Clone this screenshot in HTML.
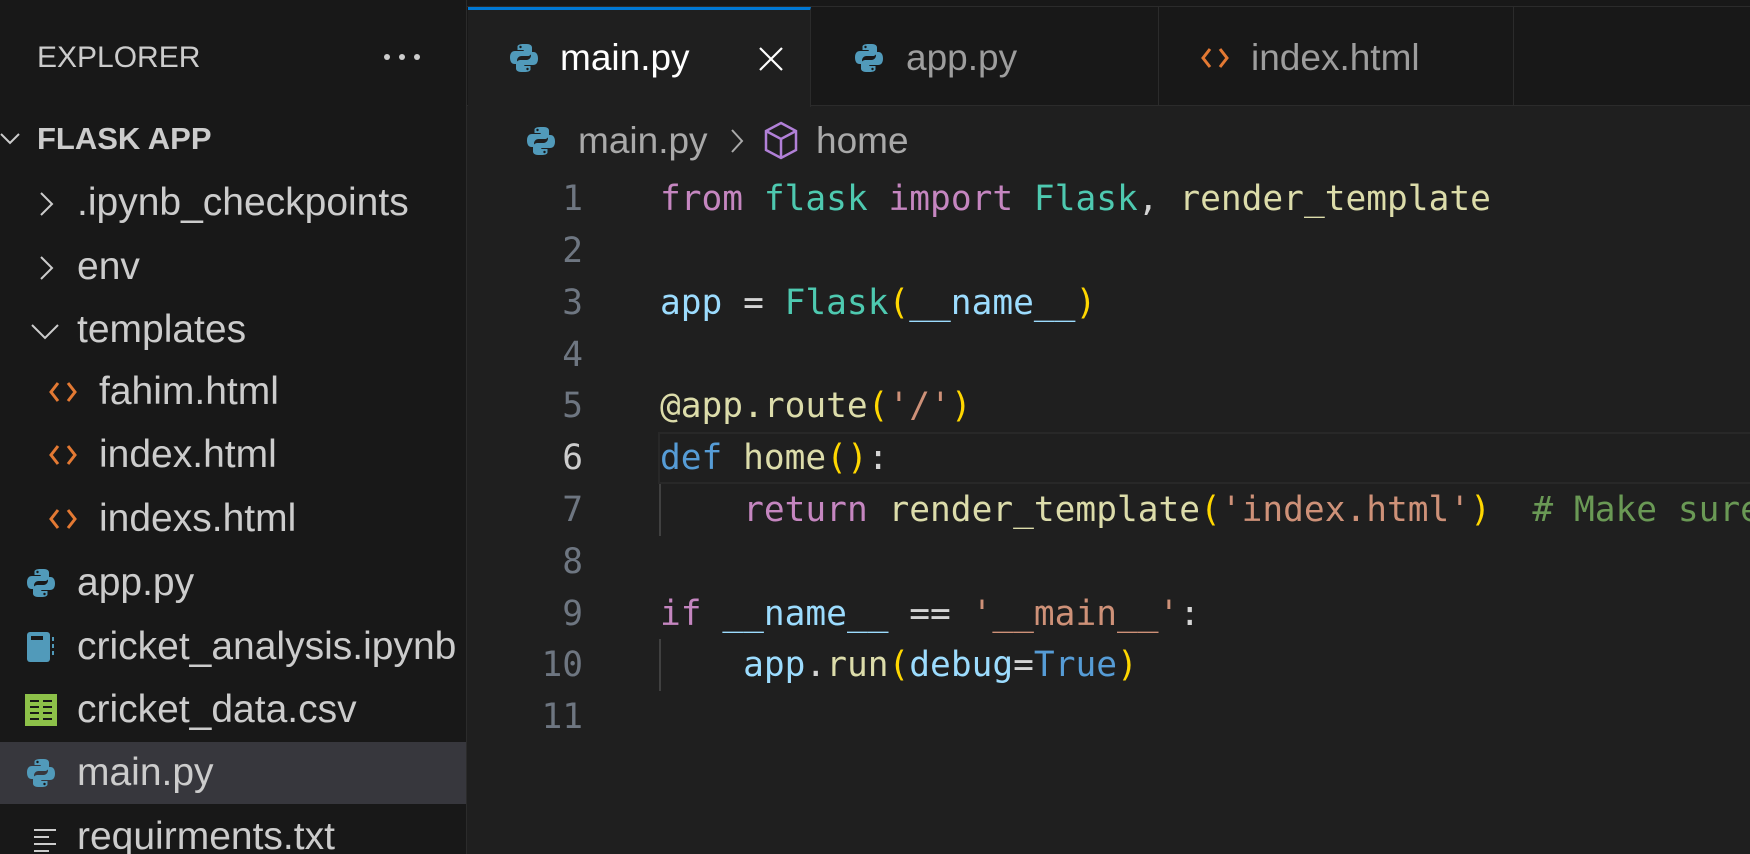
<!DOCTYPE html>
<html style="overflow:hidden"><head><meta charset="utf-8"><style>
*{margin:0;padding:0;box-sizing:border-box}
html,body{width:1750px;height:854px;overflow:hidden}
body{background:#1f1f1f;position:relative;font-family:"Liberation Sans",sans-serif}
.a{position:absolute;white-space:pre}
#side{position:absolute;left:0;top:0;width:467px;height:854px;background:#181818;border-right:1px solid #2b2b2b;overflow:hidden}
.row{position:absolute;left:0;width:466px;height:64px;line-height:64px;font-size:39px;color:#cccccc}
.code{position:absolute;left:660px;height:52px;line-height:52px;font-family:"DejaVu Sans Mono","Liberation Mono",monospace;font-size:34.5px;color:#d4d4d4;white-space:pre}
.ln{position:absolute;left:500px;width:83px;text-align:right;height:52px;line-height:52px;font-family:"DejaVu Sans Mono",monospace;font-size:34.5px;color:#6e7681}
.k{color:#c586c0}.t{color:#4ec9b0}.f{color:#dcdcaa}.v{color:#9cdcfe}.s{color:#ce9178}.b{color:#ffd700}.d{color:#569cd6}.c{color:#6a9955}
</style></head><body>
<svg width="0" height="0" style="position:absolute"><defs>
<g id="py"><path d="M14.5 1C8 1 8.5 3.8 8.5 3.8V7h6.2v1H6C3 8 1 10 1 14.5S3 21 5.5 21H8v-3.3C8 15 10 13 12.5 13h6.2c2.3 0 4.3-2 4.3-4.3V4.5C23 2.5 21 1 18 1z" fill="#519aba"/><path d="M15.5 29C22 29 21.5 26.2 21.5 26.2V23h-6.2v-1H24c3 0 5-2 5-6.5S27 9 24.5 9H22v3.3C22 15 20 17 17.5 17h-6.2C9 17 7 19 7 21.3v4.2C7 27.5 9 29 12 29z" fill="#519aba"/><circle cx="11.5" cy="4" r="1.2" fill="#181818"/><circle cx="18.5" cy="26" r="1.2" fill="#181818"/></g>
<g id="ht"><path d="M10 6L3 15l7 9M20 6l7 9-7 9" stroke="#e37933" stroke-width="3" fill="none"/></g>
</defs></svg>

<div class="a" style="left:0;top:0;width:1750px;height:7px;background:#181818;border-bottom:1px solid #2b2b2b"></div>

<div id="side">
<div class="a" style="left:37px;top:40px;font-size:30px;line-height:36px;color:#cccccc">EXPLORER</div>
<div class="a" style="left:384px;top:54px;width:6px;height:6px;border-radius:3px;background:#ccc"></div>
<div class="a" style="left:399px;top:54px;width:6px;height:6px;border-radius:3px;background:#ccc"></div>
<div class="a" style="left:414px;top:54px;width:6px;height:6px;border-radius:3px;background:#ccc"></div>

<div class="row" style="top:107px;font-weight:bold;font-size:31px"><svg class="a" style="left:0;top:22px" width="22" height="20"><path d="M1 5l9 9 9-9" stroke="#ccc" stroke-width="2" fill="none"/></svg><span class="a" style="left:37px">FLASK APP</span></div>
<div class="row" style="top:171px"><svg class="a" style="left:37px;top:20px" width="20" height="26"><path d="M4 2l11 11L4 24" stroke="#ccc" stroke-width="2" fill="none"/></svg><span class="a" style="left:77px">.ipynb_checkpoints</span></div>
<div class="row" style="top:235px"><svg class="a" style="left:37px;top:20px" width="20" height="26"><path d="M4 2l11 11L4 24" stroke="#ccc" stroke-width="2" fill="none"/></svg><span class="a" style="left:77px">env</span></div>
<div class="row" style="top:298px"><svg class="a" style="left:30px;top:24px" width="30" height="20"><path d="M2 3l13 13L28 3" stroke="#ccc" stroke-width="2" fill="none"/></svg><span class="a" style="left:77px">templates</span></div>
<div class="row" style="top:360px"><svg class="a" style="left:48px;top:17px" width="30" height="30"><use href="#ht"/></svg><span class="a" style="left:99px">fahim.html</span></div>
<div class="row" style="top:423px"><svg class="a" style="left:48px;top:17px" width="30" height="30"><use href="#ht"/></svg><span class="a" style="left:99px">index.html</span></div>
<div class="row" style="top:487px"><svg class="a" style="left:48px;top:17px" width="30" height="30"><use href="#ht"/></svg><span class="a" style="left:99px">indexs.html</span></div>
<div class="row" style="top:551px"><svg class="a" style="left:26px;top:17px" width="30" height="30"><use href="#py"/></svg><span class="a" style="left:77px">app.py</span></div>
<div class="row" style="top:615px"><svg class="a" style="left:26px;top:16px" width="30" height="32"><rect x="1" y="1" width="23" height="30" rx="3" fill="#519aba"/><rect x="5" y="5" width="12" height="4" fill="#181818"/><rect x="26" y="6" width="2" height="4" fill="#519aba"/><rect x="26" y="13" width="2" height="4" fill="#519aba"/><rect x="26" y="20" width="2" height="4" fill="#519aba"/></svg><span class="a" style="left:77px">cricket_analysis.ipynb</span></div>
<div class="row" style="top:678px"><svg class="a" style="left:25px;top:16px" width="32" height="32"><rect x="0" y="0" width="32" height="32" fill="#8dc149"/><g stroke="#181818" stroke-width="2"><path d="M5 7h9M18 7h9M5 13h9M18 13h9M5 19h9M18 19h9M5 25h9M18 25h9"/></g></svg><span class="a" style="left:77px">cricket_data.csv</span></div>
<div class="row" style="top:742px;height:62px;background:#37373d;line-height:62px"><svg class="a" style="left:26px;top:16px" width="30" height="30"><use href="#py"/></svg><span class="a" style="left:77px">main.py</span></div>
<div class="row" style="top:805px"><svg class="a" style="left:34px;top:23px" width="26" height="26"><g stroke="#ccc" stroke-width="2"><path d="M0 2h22M0 9h15M0 16h22M0 23h15"/></g></svg><span class="a" style="left:77px">requirments.txt</span></div>
</div>

<!-- tabs -->
<div class="a" style="left:467px;top:7px;width:1283px;height:99px;background:#181818;border-bottom:1px solid #2b2b2b"></div>
<div class="a" style="left:468px;top:7px;width:343px;height:100px;background:#1f1f1f;border-top:3px solid #0078d4;border-right:1px solid #2b2b2b"></div>
<div class="a" style="left:1158px;top:7px;width:1px;height:99px;background:#2b2b2b"></div>
<div class="a" style="left:1513px;top:7px;width:1px;height:99px;background:#2b2b2b"></div>
<svg class="a" style="left:509px;top:43px" width="30" height="30"><use href="#py"/></svg>
<div class="a" style="left:560px;top:35px;font-size:37px;line-height:46px;color:#ffffff">main.py</div>
<svg class="a" style="left:758px;top:46px" width="26" height="26"><path d="M2 2l22 22M24 2L2 24" stroke="#fff" stroke-width="2.2"/></svg>
<svg class="a" style="left:854px;top:43px" width="30" height="30"><use href="#py"/></svg>
<div class="a" style="left:906px;top:35px;font-size:37px;line-height:46px;color:#9d9d9d">app.py</div>
<svg class="a" style="left:1200px;top:43px" width="30" height="30"><use href="#ht"/></svg>
<div class="a" style="left:1251px;top:35px;font-size:37px;line-height:46px;color:#9d9d9d">index.html</div>

<!-- breadcrumb -->
<svg class="a" style="left:526px;top:126px" width="30" height="30"><use href="#py"/></svg>
<div class="a" style="left:578px;top:118px;font-size:37px;line-height:46px;color:#a9a9a9">main.py</div>
<svg class="a" style="left:729px;top:127px" width="16" height="28"><path d="M3 3l10 11L3 25" stroke="#a9a9a9" stroke-width="2" fill="none"/></svg>
<svg class="a" style="left:763px;top:121px" width="36" height="40"><path d="M18 2L33 10v19L18 37 3 29V10z M3 10l15 8 15-8 M18 18v19" stroke="#b180d7" stroke-width="2.5" fill="none"/></svg>
<div class="a" style="left:816px;top:118px;font-size:37px;line-height:46px;color:#a9a9a9">home</div>

<!-- current line highlight -->
<div class="a" style="left:658px;top:432px;width:1092px;height:52px;border:2px solid #282828;border-right:none"></div>
<div class="a" style="left:659px;top:484px;width:2px;height:52px;background:#404040"></div>
<div class="a" style="left:659px;top:639px;width:2px;height:52px;background:#404040"></div>

<div class="ln" style="top:173px">1</div>
<div class="ln" style="top:225px">2</div>
<div class="ln" style="top:277px">3</div>
<div class="ln" style="top:329px">4</div>
<div class="ln" style="top:380px">5</div>
<div class="ln" style="top:432px;color:#cccccc">6</div>
<div class="ln" style="top:484px">7</div>
<div class="ln" style="top:536px">8</div>
<div class="ln" style="top:588px">9</div>
<div class="ln" style="top:639px">10</div>
<div class="ln" style="top:691px">11</div>

<div class="code" style="top:173px"><span class="k">from</span> <span class="t">flask</span> <span class="k">import</span> <span class="t">Flask</span>, <span class="f">render_template</span></div>
<div class="code" style="top:277px"><span class="v">app</span> = <span class="t">Flask</span><span class="b">(</span><span class="v">__name__</span><span class="b">)</span></div>
<div class="code" style="top:380px"><span class="f">@app.route</span><span class="b">(</span><span class="s">'/'</span><span class="b">)</span></div>
<div class="code" style="top:432px"><span class="d">def</span> <span class="f">home</span><span class="b">()</span>:</div>
<div class="code" style="top:484px">    <span class="k">return</span> <span class="f">render_template</span><span class="b">(</span><span class="s">'index.html'</span><span class="b">)</span>  <span class="c"># Make sure</span></div>
<div class="code" style="top:588px"><span class="k">if</span> <span class="v">__name__</span> == <span class="s">'__main__'</span>:</div>
<div class="code" style="top:639px">    <span class="v">app</span>.<span class="f">run</span><span class="b">(</span><span class="v">debug</span>=<span class="d">True</span><span class="b">)</span></div>
</body></html>
